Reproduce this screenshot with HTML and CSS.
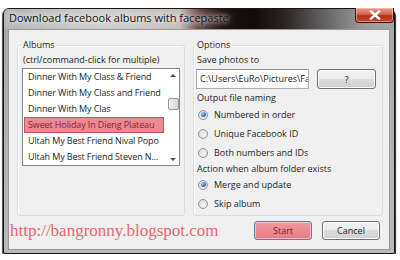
FILE: index.html
```html
<!DOCTYPE html>
<html lang="en">
<head>
    <meta charset="UTF-8">
    <title>Download facebook albums with facepaste</title>
    <link rel="stylesheet" href="styles.css">
</head>
<body>
    <div class="window">
        <div class="titlebar">
            <span class="title">Download facebook albums with facepaste</span>
            <button class="close" title="Close">
                <svg width="12" height="10" viewBox="0 0 12 10"><path d="M2 1.5 L10 8.5 M10 1.5 L2 8.5" stroke="#fff" stroke-width="2.4" stroke-linecap="square"/></svg>
            </button>
        </div>
        <div class="client">
            <div class="groups">
                <fieldset class="group albums">
                    <legend>Albums</legend>
                    <div class="hint">(ctrl/command-click for multiple)</div>
                    <div class="listbox">
                        <ul class="items">
                            <li>Dinner With My Class &amp; Friend</li>
                            <li>Dinner With My Class and Friend</li>
                            <li>Dinner With My Clas</li>
                            <li class="selected">Sweet Holiday In Dieng Plateau</li>
                            <li>Ultah My Best Friend Nival Popo</li>
                            <li>Ultah My Best Friend Steven N...</li>
                        </ul>
                        <div class="scrollbar">
                            <span class="arrow up"></span>
                            <span class="thumb"></span>
                            <span class="track"></span>
                            <span class="arrow down"></span>
                        </div>
                    </div>
                </fieldset>
                <fieldset class="group options">
                    <legend>Options</legend>
                    <div class="label">Save photos to</div>
                    <div class="path-row">
                        <div class="textbox">C:\Users\EuRo\Pictures\Fa</div>
                        <button class="btn browse">?</button>
                    </div>
                    <div class="label">Output file naming</div>
                    <div class="radio checked"><span class="mark"></span>Numbered in order</div>
                    <div class="radio"><span class="mark"></span>Unique Facebook ID</div>
                    <div class="radio"><span class="mark"></span>Both numbers and IDs</div>
                    <div class="label tight">Action when album folder exists</div>
                    <div class="radio checked"><span class="mark"></span>Merge and update</div>
                    <div class="radio"><span class="mark"></span>Skip album</div>
                </fieldset>
            </div>
            <div class="footer">
                <span class="url">http://bangronny.blogspot.com</span>
                <button class="btn start">Start</button>
                <button class="btn">Cancel</button>
            </div>
        </div>
    </div>
</body>
</html>
```

FILE: styles.css
```css
body {
    margin: 0;
    background: #fff;
    font-family: "Open Sans", "Noto Sans", sans-serif;
    font-size: 9px;
    color: #1e1e1e;
}
.window {
    margin: 8px 0 0 3px;
    width: 392px;
    height: 246px;
    box-sizing: border-box;
    display: flex;
    flex-direction: column;
    padding: 0 4px 3px;
    border: 1px solid #161616;
    border-radius: 6px 6px 2px 2px;
    background: linear-gradient(#a9a9a9, #b9b9b9);
    box-shadow: 1px 2px 1px rgba(0, 0, 0, 0.85), -1px 1px 1px rgba(0, 0, 0, 0.7);
}
.titlebar {
    display: flex;
    align-items: flex-start;
    height: 20px;
    margin: 0 -4px;
    padding-left: 5px;
    border-radius: 5px 5px 0 0;
    background: linear-gradient(90deg, #b4b4b4 0%, #cfcfcf 25%, #c4c0be 45%, #6a4a44 50%, #1e1010 56%, #120a0a 64%, #2c2424 72%, #6e6e6e 84%, #9a9a9a 92%, #a4a4a4 100%);
}
.title {
    font-size: 11px;
    line-height: 18px;
    color: #111;
    text-shadow: 0 0 4px #fff, 0 0 8px #fff;
}
.close {
    margin: -1px 0 0 auto;
    width: 39px;
    height: 15px;
    padding: 0;
    display: flex;
    align-items: center;
    justify-content: center;
    border: 1px solid #3e1810;
    border-top: none;
    border-radius: 0 0 4px 4px;
    background: linear-gradient(#e89c8c 0%, #d4644e 45%, #b22e1a 55%, #c84a30 100%);
    box-shadow: inset 0 0 0 1px rgba(255, 210, 200, 0.5);
}
.client {
    flex: 1;
    background: #f0f0f0;
    border: 1px solid #999;
    padding: 8px 6px 0 0;
}
.groups {
    display: grid;
    grid-template-columns: 168px 190px;
    gap: 8px;
    margin-left: 8px;
}
.group {
    margin: 0;
    min-width: 0;
    border: 1px solid #d5dfe5;
    border-radius: 3px;
    box-shadow: inset 1px 1px 0 #fff;
}
.group legend {
    padding: 0 1px;
    line-height: 14px;
}
.albums {
    padding: 0 4px 0 4px;
}
.options {
    padding: 0 6px 2px 2px;
}
.hint {
    padding-left: 1px;
    line-height: 15px;
}
.listbox {
    display: flex;
    height: 98px;
    box-sizing: border-box;
    margin-top: 1px;
    background: #fff;
    border: 1px solid #828790;
}
.items {
    flex: 1;
    min-width: 0;
    margin: 0;
    padding: 0;
    list-style: none;
    letter-spacing: -0.12px;
}
.items li {
    height: 16px;
    box-sizing: border-box;
    margin: 0 3px 0 1px;
    padding-left: 3px;
    border: 1px solid transparent;
    line-height: 14px;
    white-space: nowrap;
    overflow: hidden;
}
.items li.selected {
    background: #ea8a93;
    border-color: #c9525e;
    color: #8c1c2a;
}
.scrollbar {
    width: 12px;
    display: flex;
    flex-direction: column;
    align-items: center;
}
.scrollbar .arrow {
    height: 14px;
    width: 100%;
    display: flex;
    align-items: center;
    justify-content: center;
}
.scrollbar .arrow::before {
    content: "";
    border-left: 3px solid transparent;
    border-right: 3px solid transparent;
}
.scrollbar .up::before {
    border-bottom: 3px solid #505050;
    margin-top: -2px;
}
.scrollbar .down::before {
    border-top: 3px solid #505050;
    margin-top: 2px;
}
.scrollbar .thumb {
    margin-top: 15px;
    width: 11px;
    height: 12px;
    box-sizing: border-box;
    border: 1px solid #979797;
    border-radius: 2px;
    background: linear-gradient(90deg, #f4f4f4, #e2e2e2 50%, #d6d6d6);
}
.scrollbar .track {
    flex: 1;
}
.label {
    padding-left: 1px;
    line-height: 15px;
}
.label.tight {
    line-height: 13px;
}
.path-row {
    display: flex;
    gap: 8px;
    margin: 2px 0 1px;
}
.textbox {
    width: 114px;
    height: 20px;
    box-sizing: border-box;
    padding: 0 3px;
    background: #fff;
    border: 1px solid #abadb3;
    border-top-color: #8e9297;
    line-height: 18px;
    white-space: nowrap;
    overflow: hidden;
}
.btn {
    height: 19px;
    padding: 0;
    font: inherit;
    color: #1e1e1e;
    border: 1px solid #707070;
    border-radius: 3px;
    background: linear-gradient(#f2f2f2 0%, #ebebeb 50%, #dddddd 50%, #cfcfcf 100%);
    box-shadow: inset 0 0 0 1px #fbfbfb;
}
.btn.browse {
    width: 59px;
    height: 20px;
}
.radio {
    display: flex;
    align-items: center;
    gap: 6px;
    height: 19px;
    padding-left: 2px;
}
.radio .mark {
    width: 10px;
    height: 10px;
    box-sizing: border-box;
    display: flex;
    align-items: center;
    justify-content: center;
    border: 1px solid #949494;
    border-radius: 50%;
    background: radial-gradient(circle at 60% 60%, #f6f6f6, #d4d4d4);
}
.radio.checked .mark::before {
    content: "";
    width: 5px;
    height: 5px;
    border-radius: 50%;
    background: radial-gradient(circle at 35% 35%, #a8d8f8, #2a70b8 60%, #1a4c88);
}
.footer {
    display: flex;
    align-items: center;
    padding: 5px 3px 0 1px;
}
.url {
    flex: 1;
    font-family: "Liberation Serif", "DejaVu Serif", serif;
    font-size: 17px;
    line-height: 19px;
    color: #e66870;
}
.footer .btn {
    width: 58px;
    margin-left: 10px;
}
.btn.start {
    color: #7c1c24;
    border-color: #5a7fa8;
    background: linear-gradient(#f49aa0 0%, #ef8890 50%, #e97a83 100%);
    box-shadow: inset 0 0 0 1px rgba(255, 220, 225, 0.6);
}
```
